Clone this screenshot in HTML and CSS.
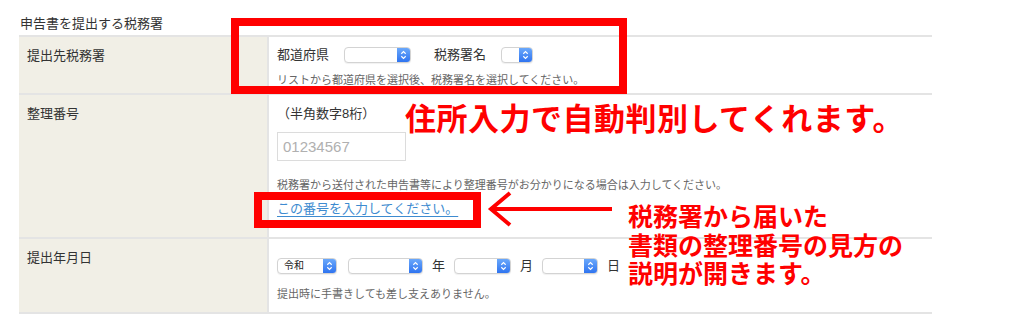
FILE: index.html
```html
<!DOCTYPE html>
<html lang="ja">

<head>
    <meta charset="UTF-8" />
    <title>申告書を提出する税務署</title>
    <link rel="stylesheet" href="styles.css">
</head>

<body>
    <div class="page">
        <h2 class="section-title">申告書を提出する税務署</h2>

        <div class="form-table">
            <!-- 提出先税務署 -->
            <div class="row row-office">
                <div class="label">提出先税務署</div>
                <div class="field">
                    <div class="inline">
                        <span class="caption">都道府県</span>
                        <span class="select sel-pref"><span class="value"></span><span class="cap"><svg viewBox="0 0 13 16"><path d="M4 6.6 6.5 4.1 9 6.6M4 9.4 6.5 11.9 9 9.4" /></svg></span></span>
                        <span class="caption">税務署名</span>
                        <span class="select sel-office"><span class="value"></span><span class="cap"><svg viewBox="0 0 13 16"><path d="M4 6.6 6.5 4.1 9 6.6M4 9.4 6.5 11.9 9 9.4" /></svg></span></span>
                    </div>
                    <p class="help help-office">リストから都道府県を選択後、税務署名を選択してください。</p>
                </div>
            </div>

            <!-- 整理番号 -->
            <div class="row row-number">
                <div class="label">整理番号</div>
                <div class="field">
                    <div class="note">（半角数字8桁）</div>
                    <input class="text-input" type="text" placeholder="01234567">
                    <p class="help help-number">税務署から送付された申告書等により整理番号がお分かりになる場合は入力してください。</p>
                    <a class="link" href="#">この番号を入力してください。</a>
                </div>
            </div>

            <!-- 提出年月日 -->
            <div class="row row-date">
                <div class="label">提出年月日</div>
                <div class="field">
                    <div class="inline date">
                        <span class="select sel-era"><span class="value">令和</span><span class="cap"><svg viewBox="0 0 13 16"><path d="M4 6.6 6.5 4.1 9 6.6M4 9.4 6.5 11.9 9 9.4" /></svg></span></span>
                        <span class="select sel-year"><span class="value"></span><span class="cap"><svg viewBox="0 0 13 16"><path d="M4 6.6 6.5 4.1 9 6.6M4 9.4 6.5 11.9 9 9.4" /></svg></span></span>
                        <span class="unit">年</span>
                        <span class="select sel-month"><span class="value"></span><span class="cap"><svg viewBox="0 0 13 16"><path d="M4 6.6 6.5 4.1 9 6.6M4 9.4 6.5 11.9 9 9.4" /></svg></span></span>
                        <span class="unit">月</span>
                        <span class="select sel-day"><span class="value"></span><span class="cap"><svg viewBox="0 0 13 16"><path d="M4 6.6 6.5 4.1 9 6.6M4 9.4 6.5 11.9 9 9.4" /></svg></span></span>
                        <span class="unit">日</span>
                    </div>
                    <p class="help help-date">提出時に手書きしても差し支えありません。</p>
                </div>
            </div>
        </div>

        <!-- 注釈 -->
        <div class="mark mark-office"></div>
        <div class="mark mark-link"></div>
        <svg class="arrow" viewBox="0 0 130 42">
            <path d="M126 21H6M24 5 5 21 24 37" />
        </svg>
        <p class="callout callout-auto">住所入力で自動判別してくれます。</p>
        <div class="callout callout-link">
            <span>税務署から届いた</span>
            <span>書類の整理番号の見方の</span>
            <span>説明が開きます。</span>
        </div>
    </div>
</body>

</html>
```

FILE: styles.css
```css
body {
    margin: 0;
    font-family: "Liberation Sans", "Noto Sans CJK JP", sans-serif;
    color: #333;
    background: #fff;
}

.page {
    position: relative;
    width: 913px;
    padding-left: 19px;
}

.section-title {
    margin: 0 0 1px;
    padding: 14px 0 0 1px;
    font-size: 13px;
    font-weight: normal;
    line-height: 20px;
    color: #333;
}

/* 表 */
.form-table {
    border-top: 2px solid #e4e4e4;
}

.row {
    display: grid;
    grid-template-columns: 250px 1fr;
    border-bottom: 2px solid #e4e4e4;
}

.label {
    background: #f1efe6;
    border-right: 2px solid #e4e4e4;
    padding: 9px 8px;
    font-size: 13px;
    line-height: 20px;
}

.field {
    padding: 10px 8px 0;
    font-size: 13px;
}

.row-office .field {
    height: 46px;
}

.row-number .field {
    height: 133px;
    padding-top: 9px;
}

.row-date .field {
    height: 54px;
    padding-top: 19px;
}

.inline {
    display: flex;
    align-items: center;
    height: 16px;
}

.caption {
    line-height: 16px;
    margin-right: 15px;
}

.row-office .select {
    margin-right: 23px;
}

.date {
    gap: 9px;
}

.date .sel-era {
    margin-right: 2px;
}

.unit {
    line-height: 16px;
}

/* セレクト */
.select {
    display: inline-flex;
    height: 16px;
    box-sizing: border-box;
    border: 1px solid #d3d3d3;
    border-radius: 4px;
    background: #fff;
    overflow: hidden;
    box-shadow: 0 1px 1px rgba(0, 0, 0, 0.06);
}

.select .value {
    flex: 1;
    padding-left: 6px;
    font-size: 10px;
    line-height: 14px;
    color: #222;
}

.select .cap {
    width: 13px;
    background: linear-gradient(#6aa8fb, #2f74f0);
}

.select svg {
    display: block;
    width: 13px;
    height: 14px;
}

.select path {
    fill: none;
    stroke: #fff;
    stroke-width: 1.3;
}

.sel-pref { width: 67px; }
.sel-office { width: 32px; }
.sel-era { width: 60px; }
.sel-year { width: 75px; }
.sel-month { width: 57px; }
.sel-day { width: 56px; }

.help {
    margin: 0;
    font-size: 11px;
    line-height: 16px;
    color: #666;
}

.help-office {
    margin-top: 9px;
}

.help-number {
    margin-top: 16px;
}

.help-date {
    margin-top: 12px;
}

.note {
    line-height: 20px;
}

.text-input {
    display: block;
    width: 129px;
    height: 29px;
    box-sizing: border-box;
    margin-top: 8px;
    padding: 0 5px;
    border: 1px solid #dcdcdc;
    font-family: inherit;
    font-size: 15px;
    color: #333;
    outline: none;
}

.text-input::placeholder {
    color: #b0b0b0;
}

.link {
    display: inline-block;
    margin-top: 6px;
    line-height: 20px;
    color: #3d8bd0;
    text-decoration: underline;
    text-underline-offset: 3px;
}

/* 注釈（赤枠・矢印・説明） */
.mark {
    position: absolute;
    border: 8px solid #ff0000;
    box-sizing: border-box;
}

.mark-office {
    left: 231px;
    top: 18px;
    width: 396px;
    height: 76px;
}

.mark-link {
    left: 254px;
    top: 192px;
    width: 227px;
    height: 36px;
}

.arrow {
    position: absolute;
    left: 486px;
    top: 188px;
    width: 130px;
    height: 42px;
}

.arrow path {
    fill: none;
    stroke: #ff0000;
    stroke-width: 4;
}

.callout {
    position: absolute;
    margin: 0;
    font-family: "Noto Sans CJK JP", sans-serif;
    font-weight: bold;
    color: #ff0000;
    white-space: nowrap;
}

.callout-auto {
    left: 405px;
    top: 99px;
    font-size: 31px;
    line-height: 36px;
    letter-spacing: 0.5px;
}

.callout-link {
    left: 628px;
    top: 201px;
    font-size: 25px;
}

.callout-link span {
    display: block;
    height: 28.5px;
    line-height: 28.5px;
}
```
